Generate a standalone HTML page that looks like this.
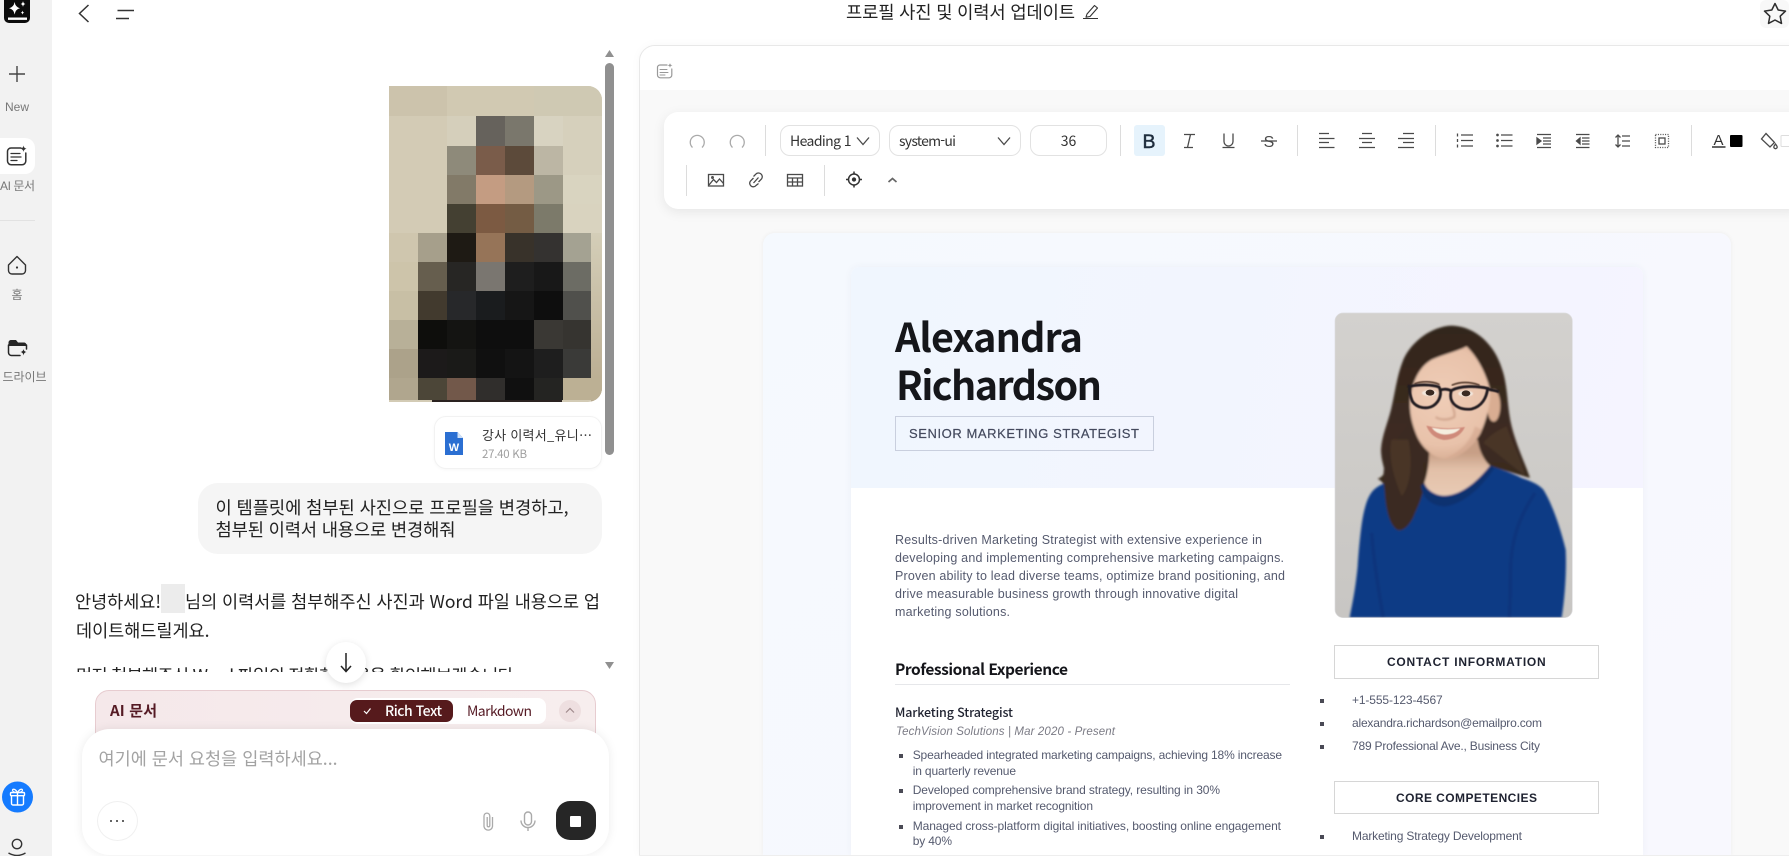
<!DOCTYPE html>
<html lang="ko">
<head>
<meta charset="utf-8">
<title>프로필 사진 및 이력서 업데이트</title>
<style>
html,body{margin:0;padding:0;width:1789px;height:856px;overflow:hidden;background:#fff}
body{position:relative;font-family:"Liberation Sans","Noto Sans CJK KR",sans-serif}
.a{position:absolute;box-sizing:border-box}
.l{position:absolute;left:0;top:0;width:1789px;height:856px;overflow:hidden}
.k{font-family:"Liberation Sans","Noto Sans CJK KR",sans-serif}
.n{font-family:"Noto Sans CJK KR","Liberation Sans",sans-serif}
.e{font-family:"Liberation Sans",sans-serif}
.tool path,.tool line,.tool circle,.tool rect.s{fill:none;stroke:#4a4a4a;stroke-width:1.3}
</style>
</head>
<body>

<!-- sidebar -->
<div class="a" style="left:0;top:0;width:52px;height:856px;background:#f2f2f2"></div>
<div class="a" style="left:0;top:138px;width:35px;height:36px;background:#fff;border-radius:0 10px 10px 0"></div>
<div class="a" style="left:0;top:220px;width:35px;height:1px;background:#e2e2e2"></div>
<svg class="l" viewBox="0 0 1789 856">
  <rect x="4" y="-8" width="26" height="31" rx="5" fill="#0c0c0c"/>
  <rect x="8" y="17.5" width="19" height="2.4" fill="#fff"/>
  <path d="M14.6 2 Q15.4 7.2 20 8.2 Q15.4 9.2 14.6 14.5 Q13.8 9.2 9 8.2 Q13.8 7.2 14.6 2Z" fill="#fff"/>
  <path d="M23 1 Q23.3 3.6 25.4 4 Q23.3 4.4 23 7 Q22.7 4.4 20.6 4 Q22.7 3.6 23 1Z" fill="#fff"/>
  <path d="M22.5 10.5 Q22.7 12.2 24.2 12.6 Q22.7 13 22.5 14.8 Q22.3 13 20.8 12.6 Q22.3 12.2 22.5 10.5Z" fill="#fff"/>
  <path d="M17 66V82M9 74H25" stroke="#444" stroke-width="1.4" fill="none"/>
  <text x="5" y="111" class="e" font-size="12" fill="#777" textLength="24">New</text>

  <g fill="none" stroke="#333" stroke-width="1.5" stroke-linecap="round">
    <path d="M21 148H11a3.5 3.5 0 0 0-3.5 3.5V161a3.8 3.8 0 0 0 3.8 3.8H22a3.8 3.8 0 0 0 3.8-3.8V153"/>
    <path d="M11 153.500H20M11 157H21M11 160.500H17" stroke-width="1.3"/>
  </g>
  <path d="M23.500 145.500Q23.800 148.200 26.500 148.700Q23.800 149.200 23.500 152Q23.200 149.200 20.500 148.700Q23.200 148.200 23.500 145.500Z" fill="#333"/>
  <text x="0" y="190" class="k" font-size="12" fill="#777" textLength="35">AI 문서</text>

  <path d="M8.500 265L17 256.500L25.500 265V270.500A3.500 3.500 0 0 1 22 274H12A3.500 3.500 0 0 1 8.500 270.500Z" fill="none" stroke="#333" stroke-width="1.4" stroke-linejoin="round"/>
  <circle cx="17" cy="267.500" r="1.100" fill="#333"/>
  <text x="17" y="299" class="k" font-size="12" fill="#777" text-anchor="middle">홈</text>

  <path d="M8.500 342.500A2.500 2.500 0 0 1 11 340H16L18 342.500H24A2.500 2.500 0 0 1 26.500 345V346H8.500Z" fill="#262626"/>
  <path d="M8.500 345V352.500A3 3 0 0 0 11.500 355.500H20M26.500 345V349" fill="none" stroke="#262626" stroke-width="1.500" stroke-linecap="round"/>
  <path d="M23.500 349Q23.800 351.600 26.500 352Q23.800 352.400 23.500 355.500Q23.200 352.400 20.500 352Q23.200 351.600 23.500 349Z" fill="#262626"/>
  <text x="2.500" y="381" class="k" font-size="12" fill="#777" textLength="44">드라이브</text>

  <circle cx="17.500" cy="797" r="15.500" fill="#157bff"/>
  <g fill="none" stroke="#fff" stroke-width="1.400">
    <rect x="10.500" y="792.500" width="14" height="3.200" rx="1"/>
    <path d="M11.500 796V803.500A1.500 1.500 0 0 0 13 805H22A1.500 1.500 0 0 0 23.500 803.500V796M17.500 792.500V805"/>
    <path d="M17.500 792.500C15 788 11.500 788.800 12.800 791C13.500 792.300 16 792.500 17.500 792.500C19 792.500 21.500 792.300 22.200 791C23.500 788.800 20 788 17.500 792.500Z" stroke-width="1.200"/>
  </g>
  <circle cx="17" cy="844" r="4.700" fill="none" stroke="#333" stroke-width="1.400"/>
  <path d="M8.500 853Q17 858 25.500 853" fill="none" stroke="#333" stroke-width="1.400"/>
</svg>

<!-- top bar -->
<svg class="l" viewBox="0 0 1789 856">
  <path d="M88.500 5L79.500 13.500L88.500 22" fill="none" stroke="#333" stroke-width="1.500"/>
  <path d="M117.500 10.500H134M116 18.500H129" fill="none" stroke="#333" stroke-width="1.500"/>
  <text x="846" y="18.500" class="n" font-size="17.700" fill="#222" textLength="229">프로필 사진 및 이력서 업데이트</text>
  <path d="M1087 14L1094.500 5.500L1097.500 8L1090 16.500L1086 17.200Z" fill="none" stroke="#333" stroke-width="1.100" stroke-linejoin="round"/>
  <path d="M1083 18.500H1098" stroke="#333" stroke-width="1"/>
  <rect x="1760" y="0" width="29" height="28" rx="6" fill="#f8f8f8"/>
  <path d="M1775 3.500L1778.200 10L1785.500 11.100L1780.200 16.200L1781.500 23.400L1775 20L1768.500 23.400L1769.800 16.200L1764.500 11.100L1771.800 10Z" fill="none" stroke="#2d2d2d" stroke-width="1.500" stroke-linejoin="round"/>
</svg>

<!-- chat -->
<svg class="l" viewBox="0 0 1789 856">
  <defs>
    <clipPath id="ph"><path d="M389 86H588A14 14 0 0 1 602 100V388A14 14 0 0 1 588 402H389Z"/></clipPath>
    <clipPath id="chatclip"><rect x="60" y="40" width="545" height="632"/></clipPath>
    <linearGradient id="edge" x1="0" y1="0" x2="0" y2="1"><stop offset="0" stop-color="#d4ceb8"/><stop offset="1" stop-color="#b8aa8e"/></linearGradient>
  </defs>
  <g clip-path="url(#ph)" shape-rendering="crispEdges">
    <rect x="389" y="86" width="213" height="316" fill="#d3cbb5"/>
    <rect x="591" y="233" width="11" height="169" fill="url(#edge)"/>
    <rect x="389" y="86" width="58" height="30" fill="#ccc3ac"/><rect x="447" y="86" width="87" height="30" fill="#d1c9b2"/><rect x="534" y="86" width="68" height="30" fill="#cfc9b3"/>
    <rect x="447" y="116" width="29" height="30" fill="#d5cfbb"/><rect x="476" y="116" width="29" height="30" fill="#66625c"/><rect x="505" y="116" width="29" height="30" fill="#7a776c"/><rect x="534" y="116" width="29" height="30" fill="#d8d3c1"/><rect x="563" y="116" width="39" height="30" fill="#d6d0bc"/>
    <rect x="447" y="146" width="29" height="29" fill="#8e8a7a"/><rect x="476" y="146" width="29" height="29" fill="#7a5c4a"/><rect x="505" y="146" width="29" height="29" fill="#5c4a3a"/><rect x="534" y="146" width="29" height="29" fill="#bcb6a4"/><rect x="563" y="146" width="39" height="29" fill="#d6d0bc"/>
    <rect x="447" y="175" width="29" height="29" fill="#827a68"/><rect x="476" y="175" width="29" height="29" fill="#c49c82"/><rect x="505" y="175" width="29" height="29" fill="#b49a80"/><rect x="534" y="175" width="29" height="29" fill="#9c9886"/><rect x="563" y="175" width="39" height="29" fill="#d9d4c0"/>
    <rect x="447" y="204" width="29" height="29" fill="#444032"/><rect x="476" y="204" width="29" height="29" fill="#7c5a42"/><rect x="505" y="204" width="29" height="29" fill="#745c44"/><rect x="534" y="204" width="29" height="29" fill="#7c7a6a"/><rect x="563" y="204" width="39" height="29" fill="#d9d3bf"/>
    <rect x="389" y="233" width="29" height="29" fill="#cfc6ae"/><rect x="418" y="233" width="29" height="29" fill="#a69f8b"/><rect x="447" y="233" width="29" height="29" fill="#1e1a14"/><rect x="476" y="233" width="29" height="29" fill="#967458"/><rect x="505" y="233" width="29" height="29" fill="#38322a"/><rect x="534" y="233" width="29" height="29" fill="#343230"/><rect x="563" y="233" width="28" height="29" fill="#a4a292"/>
    <rect x="389" y="262" width="29" height="29" fill="#cdc4aa"/><rect x="418" y="262" width="29" height="29" fill="#665e4e"/><rect x="447" y="262" width="29" height="29" fill="#272624"/><rect x="476" y="262" width="29" height="29" fill="#7a7670"/><rect x="505" y="262" width="29" height="29" fill="#1e1e1e"/><rect x="534" y="262" width="29" height="29" fill="#181818"/><rect x="563" y="262" width="28" height="29" fill="#6c6c64"/>
    <rect x="389" y="291" width="29" height="29" fill="#c8bfa5"/><rect x="418" y="291" width="29" height="29" fill="#423a2e"/><rect x="447" y="291" width="29" height="29" fill="#27282a"/><rect x="476" y="291" width="29" height="29" fill="#1a1c1e"/><rect x="505" y="291" width="29" height="29" fill="#161616"/><rect x="534" y="291" width="29" height="29" fill="#0e0e0e"/><rect x="563" y="291" width="28" height="29" fill="#50504c"/>
    <rect x="389" y="320" width="29" height="29" fill="#b8b098"/><rect x="418" y="320" width="29" height="29" fill="#0e0e0c"/><rect x="447" y="320" width="29" height="29" fill="#141412"/><rect x="476" y="320" width="29" height="29" fill="#0e0e0e"/><rect x="505" y="320" width="29" height="29" fill="#0e0e0e"/><rect x="534" y="320" width="29" height="29" fill="#3a3834"/><rect x="563" y="320" width="28" height="29" fill="#363430"/>
    <rect x="389" y="349" width="29" height="29" fill="#aca28a"/><rect x="418" y="349" width="29" height="29" fill="#1c1a1a"/><rect x="447" y="349" width="29" height="29" fill="#1a1a18"/><rect x="476" y="349" width="29" height="29" fill="#101010"/><rect x="505" y="349" width="29" height="29" fill="#141414"/><rect x="534" y="349" width="29" height="29" fill="#1e1e1e"/><rect x="563" y="349" width="28" height="29" fill="#3a3a38"/>
    <rect x="389" y="378" width="29" height="22" fill="#b0a68e"/><rect x="418" y="378" width="29" height="22" fill="#4c4638"/><rect x="447" y="378" width="29" height="22" fill="#72584a"/><rect x="476" y="378" width="29" height="22" fill="#302e2c"/><rect x="505" y="378" width="29" height="22" fill="#101010"/><rect x="534" y="378" width="29" height="22" fill="#242422"/><rect x="563" y="378" width="39" height="22" fill="#bcb094"/>
    <rect x="432" y="400" width="130" height="2" fill="#2a2220"/>
  </g>

  <rect x="605" y="63" width="9" height="392" rx="4.500" fill="#909090"/>
  <path d="M609.500 50L614 57H605Z" fill="#909090"/>
  <path d="M605 662H614L609.500 669Z" fill="#909090"/>
</svg>

<div class="a" style="left:434px;top:416px;width:168px;height:53px;background:#fff;border:1px solid #f2f2f2;border-radius:12px;box-shadow:0 1px 3px rgba(0,0,0,.03)"></div>
<div class="a" style="left:198px;top:483px;width:404px;height:71px;background:#f5f5f5;border-radius:20px"></div>

<svg class="l" viewBox="0 0 1789 856">
  <path d="M445 432H457.500L463 438V455H445Z" fill="#2b6fd2"/>
  <path d="M457.500 432L463 438H457.500Z" fill="#cfe0f7"/>
  <text x="454" y="451" class="e" font-size="11" font-weight="700" fill="#fff" text-anchor="middle">W</text>
  <text x="482" y="440" class="n" font-size="13" fill="#333" textLength="110">강사 이력서_유니…</text>
  <text x="482" y="458" class="n" font-size="11.500" fill="#a0a0a0" textLength="45">27.40 KB</text>
  <text x="215.500" y="514" class="n" font-size="17.700" fill="#222" textLength="353">이 템플릿에 첨부된 사진으로 프로필을 변경하고,</text>
  <text x="215.500" y="536" class="n" font-size="17.700" fill="#222" textLength="240">첨부된 이력서 내용으로 변경해줘</text>
  <g clip-path="url(#chatclip)">
    <rect x="161" y="584" width="24" height="29" fill="#ececec"/>
    <text x="75" y="608" class="n" font-size="17.500" fill="#222" textLength="86">안녕하세요!</text>
    <text x="185" y="608" class="n" font-size="17.500" fill="#222" textLength="415">님의 이력서를 첨부해주신 사진과 Word 파일 내용으로 업</text>
    <text x="76" y="637" class="n" font-size="17.500" fill="#222" textLength="133.500">데이트해드릴게요.</text>
    <text x="76" y="682" class="n" font-size="17.500" fill="#222" textLength="442">먼저 첨부해주신 Word 파일의 정확한 내용을 확인해보겠습니다.</text>
  </g>
</svg>

<div class="a" style="left:326px;top:642px;width:40px;height:41px;border-radius:50%;background:#fff;box-shadow:0 2px 8px rgba(0,0,0,.12)"></div>
<svg class="l" viewBox="0 0 1789 856">
  <path d="M346 653V671M341 666L346 671.500L351 666" fill="none" stroke="#222" stroke-width="1.500"/>
</svg>

<!-- AI panel -->
<div class="a" style="left:95px;top:690px;width:501px;height:60px;border:1px solid #e7ccd0;border-radius:14px;background:linear-gradient(90deg,#f5e8ea,#f7eeee)"></div>
<div class="a" style="left:350px;top:698px;width:196px;height:26px;border-radius:8px;background:#fff"></div>
<div class="a" style="left:350px;top:700px;width:103px;height:22px;border-radius:7px;background:#561a1c"></div>
<div class="a" style="left:559px;top:700px;width:22px;height:22px;border-radius:50%;background:#eedfe0"></div>
<svg class="l" viewBox="0 0 1789 856">
  <text x="110" y="716" class="n" font-size="15" font-weight="700" fill="#551a24" textLength="47">AI 문서</text>
  <path d="M364 711L366.500 713.500L370.500 708.500" fill="none" stroke="#fff" stroke-width="1.200"/>
  <text x="385" y="716" class="n" font-size="14" font-weight="500" fill="#fff" textLength="57">Rich Text</text>
  <text x="467" y="716" class="n" font-size="14" fill="#551a24" textLength="65">Markdown</text>
  <path d="M566 712.500L570 708.500L574 712.500" fill="none" stroke="#a08a8c" stroke-width="1.200"/>
</svg>

<!-- input -->
<div class="a" style="left:82px;top:729px;width:527px;height:126px;background:#fff;border-radius:28px;box-shadow:0 0 10px rgba(0,0,0,.08)"></div>
<div class="a" style="left:97px;top:801px;width:41px;height:40px;border-radius:50%;background:#fff;border:1px solid #f0f0f0"></div>
<div class="a" style="left:556px;top:801px;width:40px;height:39px;border-radius:14px;background:#262626"></div>
<div class="a" style="left:570px;top:816px;width:11px;height:11px;background:#fff;border-radius:1px"></div>
<svg class="l" viewBox="0 0 1789 856">
  <text x="98.500" y="765" class="n" font-size="17.500" fill="#a3a3a3" textLength="239">여기에 문서 요청을 입력하세요...</text>
  <circle cx="111" cy="821" r="1" fill="#333"/><circle cx="117" cy="821" r="1" fill="#333"/><circle cx="123" cy="821" r="1" fill="#333"/>
  <path d="M492.500 817V826.500A4.300 4.300 0 0 1 484 826.500V816A2.900 2.900 0 0 1 489.800 816V825.500A1.300 1.300 0 0 1 487.200 825.500V817" fill="none" stroke="#aaa" stroke-width="1.300"/>
  <rect x="524.500" y="812" width="7" height="13" rx="3.500" fill="none" stroke="#aaa" stroke-width="1.400"/>
  <path d="M521 820.500A7 7 0 0 0 535 820.500M528 827.500V831" fill="none" stroke="#aaa" stroke-width="1.400"/>
</svg>

<!-- right panel -->
<div class="a" style="left:639px;top:45px;width:1170px;height:811px;background:#f9f9f9;border:1px solid #e8e8e8;border-radius:16px 0 0 0;box-shadow:0 0 10px rgba(0,0,0,.03);overflow:hidden">
  <div class="a" style="left:0;top:0;width:100%;height:44px;background:#fff"></div>
</div>
<svg class="l" viewBox="0 0 1789 856">
  <g fill="none" stroke="#999" stroke-width="1.200" stroke-linecap="round">
    <path d="M667 65H660A2.500 2.500 0 0 0 657.500 67.500V75A2.800 2.800 0 0 0 660.300 77.800H669A2.800 2.800 0 0 0 671.800 75V69"/>
    <path d="M660 69.500H667M660 72.500H668M660 75H665" stroke-width="1"/>
  </g>
  <path d="M670 63Q670.200 65 672.500 65.300Q670.200 65.700 670 68Q669.800 65.700 667.500 65.300Q669.800 65 670 63Z" fill="#999"/>
</svg>

<!-- resume outer -->
<div class="a" style="left:763px;top:233px;width:968px;height:622px;border-radius:12px 12px 0 0;background:linear-gradient(135deg,#f5f9fe,#f8f8fe);box-shadow:0 0 5px rgba(0,0,0,.06)"></div>
<div class="a" style="left:851px;top:267px;width:792px;height:588px;background:#fff;border-radius:8px 8px 0 0;box-shadow:0 0 8px rgba(60,70,120,.05);overflow:hidden">
  <div class="a" style="left:0;top:0;width:100%;height:221px;background:linear-gradient(100deg,#f0f6fe,#f5f4ff)"></div>
</div>
<div class="a" style="left:895px;top:416px;width:259px;height:35px;border:1px solid #c9cfde"></div>
<div class="a" style="left:1334px;top:645px;width:265px;height:34px;border:1px solid #d6d6d6"></div>
<div class="a" style="left:1334px;top:781px;width:265px;height:33px;border:1px solid #d6d6d6"></div>
<div class="a" style="left:895px;top:684px;width:395px;height:1px;background:#e6e7ea"></div>
<div class="a" style="left:639px;top:855px;width:1150px;height:1px;background:#eee"></div>

<svg class="l" viewBox="0 0 1789 856">
  <text x="895" y="352" class="n" font-size="39.500" font-weight="700" fill="#15161a" textLength="188">Alexandra</text>
  <text x="896" y="400" class="n" font-size="39.500" font-weight="700" fill="#15161a" textLength="206">Richardson</text>
  <text x="909" y="438" class="e" font-size="13" stroke="#444a5e" stroke-width=".2" fill="#444a5e" textLength="230">SENIOR MARKETING STRATEGIST</text>

  <g class="e" font-size="12.500" fill="#555a6e">
    <text x="895" y="544" textLength="367">Results-driven Marketing Strategist with extensive experience in</text>
    <text x="895" y="562" textLength="389">developing and implementing comprehensive marketing campaigns.</text>
    <text x="895" y="580" textLength="390">Proven ability to lead diverse teams, optimize brand positioning, and</text>
    <text x="895" y="598" textLength="343">drive measurable business growth through innovative digital</text>
    <text x="895" y="616" textLength="115">marketing solutions.</text>
  </g>
  <text x="895" y="675" class="n" font-size="15.500" font-weight="700" fill="#14151a" textLength="173">Professional Experience</text>
  <text x="895" y="717" class="n" font-size="12.500" font-weight="500" fill="#1f2230" textLength="118">Marketing Strategist</text>
  <text x="896" y="735" class="e" font-size="11.500" font-style="italic" fill="#7b7b85" textLength="219">TechVision Solutions | Mar 2020 - Present</text>
  <g fill="#4a4a55">
    <rect x="899" y="754" width="4" height="4"/><rect x="899" y="789" width="4" height="4"/><rect x="899" y="825" width="4" height="4"/>
    <rect x="1320" y="699" width="4" height="4"/><rect x="1320" y="722" width="4" height="4"/><rect x="1320" y="745" width="4" height="4"/><rect x="1320" y="835" width="4" height="4"/>
  </g>
  <g class="e" font-size="12" fill="#555a6e">
    <text x="912.700" y="759" textLength="369.300">Spearheaded integrated marketing campaigns, achieving 18% increase</text>
    <text x="912.700" y="775" textLength="103.300">in quarterly revenue</text>
    <text x="912.700" y="794" textLength="307.300">Developed comprehensive brand strategy, resulting in 30%</text>
    <text x="912.700" y="810" textLength="180.300">improvement in market recognition</text>
    <text x="912.700" y="830" textLength="368.300">Managed cross-platform digital initiatives, boosting online engagement</text>
    <text x="912.700" y="845" textLength="39.300">by 40%</text>
    <text x="1352" y="704" textLength="90.700">+1-555-123-4567</text>
    <text x="1352" y="727" textLength="190">alexandra.richardson@emailpro.com</text>
    <text x="1352" y="750" textLength="188">789 Professional Ave., Business City</text>
    <text x="1352" y="840" textLength="170">Marketing Strategy Development</text>
  </g>
  <text x="1387" y="666" class="e" font-size="12" font-weight="700" fill="#1e2230" textLength="158.700">CONTACT INFORMATION</text>
  <text x="1396" y="802" class="e" font-size="12" font-weight="700" fill="#1e2230" textLength="141">CORE COMPETENCIES</text>

  <!-- portrait -->
  <defs>
    <clipPath id="pc"><rect x="0" y="0" width="712" height="914" rx="24"/></clipPath>
    <linearGradient id="bgp" x1="0" y1="0" x2="0" y2="1"><stop offset="0" stop-color="#d3d1ce"/><stop offset="1" stop-color="#c8c6c3"/></linearGradient>
    <radialGradient id="skin" gradientUnits="userSpaceOnUse" cx="320" cy="250" r="210"><stop offset="0" stop-color="#efcdb7"/><stop offset=".7" stop-color="#e8c2aa"/><stop offset="1" stop-color="#d4a88e"/></radialGradient>
    <linearGradient id="hairg" gradientUnits="userSpaceOnUse" x1="0" y1="40" x2="0" y2="650"><stop offset="0" stop-color="#33251d"/><stop offset=".55" stop-color="#3d2c21"/><stop offset="1" stop-color="#33251c"/></linearGradient>
    <linearGradient id="neckg" gradientUnits="userSpaceOnUse" x1="0" y1="420" x2="0" y2="545"><stop offset="0" stop-color="#c79f86"/><stop offset=".4" stop-color="#e2c0a8"/><stop offset="1" stop-color="#e8cab4"/></linearGradient>
    <filter id="sf" x="-5%" y="-5%" width="110%" height="110%"><feGaussianBlur stdDeviation="3"/></filter>
    <filter id="sf2" x="-20%" y="-20%" width="140%" height="140%"><feGaussianBlur stdDeviation="12"/></filter>
    <filter id="sf3" x="-10%" y="-30%" width="120%" height="160%"><feGaussianBlur stdDeviation="1.200"/></filter>
  </defs>
  <g transform="translate(1335 313) scale(.33333)">
    <g clip-path="url(#pc)">
      <rect x="0" y="0" width="712" height="914" fill="url(#bgp)"/>
      <g filter="url(#sf)">
        <path d="M350 38C290 40 230 85 205 140C185 190 180 240 168 290C158 330 140 370 138 410C138 445 150 465 148 480C142 490 135 495 128 497C140 505 148 510 150 530C150 570 160 625 180 648C200 662 225 640 238 610C255 580 270 540 275 510L460 458L585 495C570 450 545 400 530 340C515 280 520 220 500 165C480 100 425 40 350 38Z" fill="url(#hairg)"/>
        <!-- sweater -->
        <path d="M465 458C500 470 530 480 560 495C590 505 612 515 625 530C650 570 675 640 692 710C695 770 690 850 680 914H44C50 880 60 840 68 760C72 700 78 640 84 610C92 570 100 550 112 535C135 510 165 505 190 505C215 505 245 505 268 510C275 530 300 548 330 548C385 545 430 500 465 458Z" fill="#0d3b85"/>
        <!-- hair over sweater on left -->
        <path d="M150 450C140 490 150 530 150 550C155 600 165 635 185 650C205 660 230 630 240 600C255 570 268 530 272 500C260 440 250 400 225 330C190 370 160 410 150 450Z" fill="#3b2a20"/>
        <!-- neck -->
        <path d="M282 400C285 450 275 490 268 510C275 530 300 548 330 548C385 545 430 500 465 458C445 440 432 410 428 380Z" fill="url(#neckg)"/>
        <path d="M268 510C275 535 300 550 330 550C385 547 430 502 465 458L478 466C440 520 390 572 330 580C290 580 262 555 258 518Z" fill="#0a3070"/>
        <!-- ear -->
        <ellipse cx="476" cy="278" rx="20" ry="48" fill="#d9ad92"/>
        <!-- face -->
        <path d="M395 100C360 118 320 125 290 140C255 160 235 200 226 250C222 290 228 325 244 365C260 405 295 437 332 437C372 437 415 400 437 360C452 325 466 280 466 235C455 185 430 135 395 100Z" fill="url(#skin)"/>
        <!-- hair lights -->
        <path d="M445 390C475 410 520 450 570 488C560 440 530 390 515 340C490 350 460 370 445 390Z" fill="#4a3628" opacity=".85"/>
        <path d="M170 380C160 420 170 480 200 550C225 520 235 450 220 380Z" fill="#4e392a" opacity=".7"/>
        <!-- nose shade -->
        <path d="M350 265C352 285 362 298 358 312C340 322 315 322 302 312" stroke="#cda088" stroke-width="6" fill="none"/>
        <path d="M420 340C405 390 370 420 330 436C380 432 420 395 440 350Z" fill="#cda088" opacity=".5"/>
        <!-- sleeve seams -->
        <path d="M600 540C560 600 535 660 528 740C524 810 528 860 522 914" stroke="#0a3072" stroke-width="10" fill="none" opacity=".55"/>
        <path d="M110 660C115 730 130 830 145 914" stroke="#0a3072" stroke-width="10" fill="none" opacity=".5"/>
      </g>
      <!-- brows -->
      <g filter="url(#sf3)" fill="none" stroke="#5a4030" stroke-width="5" stroke-linecap="round">
        <path d="M240 212C260 204 290 204 312 214"/>
        <path d="M352 216C375 206 405 206 432 216"/>
      </g>
      <!-- eyes -->
      <ellipse cx="283" cy="240" rx="22" ry="9" fill="#f3e8de" filter="url(#sf3)"/>
      <ellipse cx="392" cy="242" rx="22" ry="9" fill="#f3e8de" filter="url(#sf3)"/>
      <ellipse cx="285" cy="239" rx="13" ry="9" fill="#3a2a22"/>
      <ellipse cx="393" cy="241" rx="13" ry="9" fill="#3a2a22"/>
      <!-- glasses -->
      <g fill="none" stroke="#221d20" stroke-width="8.500" filter="url(#sf3)">
        <path d="M224 220C250 214 290 214 312 222C322 240 315 265 295 278C275 290 245 285 232 265C226 250 222 235 224 220Z"/>
        <path d="M350 232C375 218 425 218 458 226C455 255 440 280 410 288C380 292 355 280 348 258C346 248 346 240 350 232Z"/>
        <path d="M314 232Q332 224 350 234"/>
        <path d="M218 218L226 222M458 228L492 236"/>
      </g>
      <!-- mouth -->
      <path d="M274 338Q330 352 390 342Q372 380 326 381Q288 375 274 338Z" fill="#cf8a7a" filter="url(#sf3)"/>
      <path d="M290 344Q330 352 376 346Q362 364 328 365Q302 362 290 344Z" fill="#f5eedf" filter="url(#sf3)"/>
    </g>
    <rect x="0" y="0" width="712" height="914" rx="24" fill="none" stroke="#dcdcde" stroke-width="2"/>
  </g>
</svg>

<!-- toolbar -->
<div class="a" style="left:664px;top:112px;width:1140px;height:97px;background:#fff;border-radius:14px;box-shadow:0 3px 12px rgba(0,0,0,.08)"></div>
<div class="a" style="left:780px;top:125px;width:100px;height:31px;border:1px solid #e2e2e2;border-radius:10px"></div>
<div class="a" style="left:889px;top:125px;width:132px;height:31px;border:1px solid #e2e2e2;border-radius:10px"></div>
<div class="a" style="left:1030px;top:125px;width:77px;height:31px;border:1px solid #e2e2e2;border-radius:10px"></div>
<div class="a" style="left:1134px;top:125px;width:31px;height:31px;background:#e6f3fc;border-radius:3px"></div>
<svg class="l tool" viewBox="0 0 1789 856">
  <g>
    <line x1="765.500" y1="125" x2="765.500" y2="156" style="stroke:#dcdcdc;stroke-width:1"/>
    <line x1="1120.500" y1="125" x2="1120.500" y2="156" style="stroke:#dcdcdc;stroke-width:1"/>
    <line x1="1297.500" y1="125" x2="1297.500" y2="156" style="stroke:#dcdcdc;stroke-width:1"/>
    <line x1="1435.500" y1="125" x2="1435.500" y2="156" style="stroke:#dcdcdc;stroke-width:1"/>
    <line x1="1691.500" y1="125" x2="1691.500" y2="156" style="stroke:#dcdcdc;stroke-width:1"/>
    <line x1="686.500" y1="165" x2="686.500" y2="196" style="stroke:#dcdcdc;stroke-width:1"/>
    <line x1="824.500" y1="165" x2="824.500" y2="196" style="stroke:#dcdcdc;stroke-width:1"/>
  </g>
  <path d="M692.500 147.500A7 7 0 1 1 702 147.500" style="stroke:#aaa"/>
  <path d="M732.500 147.500A7 7 0 1 1 742 147.500" style="stroke:#aaa"/>
  <text x="790" y="146" class="n" font-size="14" fill="#333" textLength="61.500">Heading 1</text>
  <path d="M857 137.500L863 144.500L869 137.500"/>
  <text x="899" y="146" class="n" font-size="14" fill="#333" textLength="57">system-ui</text>
  <path d="M998 137.500L1004 144.500L1010 137.500"/>
  <text x="1068.500" y="146" class="n" font-size="14" fill="#333" text-anchor="middle">36</text>
  <text x="1149" y="148" class="e" font-size="19.500" fill="#1f2d3d" stroke="#1f2d3d" stroke-width=".5" text-anchor="middle">B</text>
  <path d="M1184 134.500H1195M1190.500 134.500L1187.500 147.500M1184 147.500H1193"/>
  <path d="M1224 133.500V141.500A4.500 4.500 0 0 0 1233 141.500V133.500M1222.500 147.500H1234.500"/>
  <text x="1269" y="147" class="e" font-size="16" fill="#4a4a4a" text-anchor="middle">S</text>
  <path d="M1261 141H1277"/>
  <path d="M1319 133.500H1329M1319 138.500H1334.500M1319 142.500H1329M1319 147.500H1334.500"/>
  <path d="M1362 133.500H1372M1359 138.500H1375M1362 142.500H1372M1359 147.500H1375"/>
  <path d="M1403 133.500H1414M1398 138.500H1414M1403 142.500H1414M1398 147.500H1414"/>
  <path d="M1461 135H1473M1461 140.500H1473M1461 146H1473M1457.500 133.500V136.500M1457.500 139V142M1457.500 144.500V147.500"/>
  <path d="M1501 135H1512.500M1501 140.500H1512.500M1501 146H1512.500"/>
  <circle cx="1497.500" cy="135" r=".7"/><circle cx="1497.500" cy="140.500" r=".7"/><circle cx="1497.500" cy="146" r=".7"/>
  <path d="M1537 134.500H1551M1543 138H1551M1543 141H1551M1543 144H1551M1537 147.500H1551"/>
  <path d="M1537 138L1541 141L1537 144Z" style="fill:#4a4a4a"/>
  <path d="M1576 134.500H1589.500M1582 138H1589.500M1582 141H1589.500M1582 144H1589.500M1576 147.500H1589.500"/>
  <path d="M1580 138L1576.500 141L1580 144Z" style="fill:#4a4a4a"/>
  <path d="M1618 135V147M1615.500 137.500L1618 135L1620.500 137.500M1615.500 144.500L1618 147L1620.500 144.500M1622 136H1630M1622 141H1630M1622 146H1630"/>
  <rect class="s" x="1655.500" y="134.500" width="13" height="13" style="stroke-dasharray:1 1.400"/>
  <rect class="s" x="1659" y="138" width="6" height="6"/>
  <text x="1718.500" y="145" class="e" font-size="15" fill="#333" text-anchor="middle">A</text>
  <path d="M1712 147H1725.500" style="stroke:#333;stroke-width:1.500"/>
  <rect x="1730" y="135" width="12.500" height="12" rx="1" fill="#000"/>
  <path d="M1766 133.500L1774.500 142.500L1770 147L1761.500 139Z"/>
  <path d="M1775.500 144C1774.500 145.500 1773.800 146.200 1773.800 147A1.700 1.700 0 0 0 1777.200 147C1777.200 146.200 1776.500 145.500 1775.500 144Z"/>
  <rect class="s" x="1781" y="135.500" width="14" height="11" rx="1" style="stroke:#ddd;stroke-width:1"/>

  <rect class="s" x="708.500" y="174.500" width="15" height="11.500"/>
  <path d="M709 185L713.500 179.500L716.500 182.500L719.500 179L723.500 183.500"/>
  <circle cx="712.500" cy="177.500" r=".8"/>
  <path d="M753.500 176.500L755.500 174.500A2.800 2.800 0 0 1 761.500 179L758.500 182M758.500 183.500L756 185.500A2.800 2.800 0 0 1 750.500 181L753.500 178M753.500 183L758.500 177.500"/>
  <rect class="s" x="787.500" y="174.500" width="15" height="11.500"/>
  <path d="M787.500 178H802.500M787.500 182H802.500M792.500 178V186M797.500 178V186"/>
  <circle cx="854" cy="179.500" r="5.500" style="stroke:#333;stroke-width:1.500"/>
  <circle cx="854" cy="179.500" r="1.500" style="fill:#333;stroke:#333"/>
  <path d="M854 171.500V174M854 185V187.500M846 179.500H848.500M859.500 179.500H862" style="stroke:#333;stroke-width:1.500"/>
  <path d="M888.500 182L892.500 178.500L896.500 182" style="stroke:#666;stroke-width:1.700"/>
</svg>

</body>
</html>
